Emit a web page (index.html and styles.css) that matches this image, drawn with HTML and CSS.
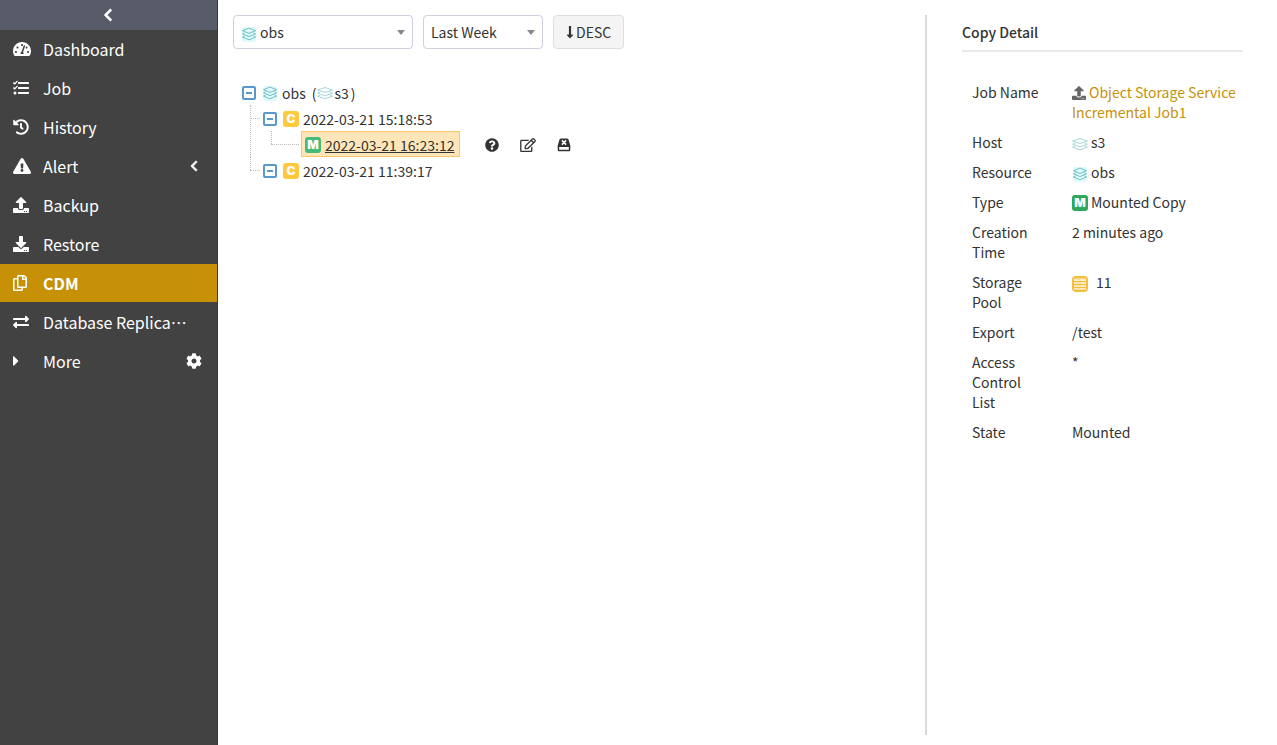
FILE: index.html
```
<!DOCTYPE html>
<html lang="en">
<head>
<meta charset="utf-8">
<title>CDM</title>
<link rel="stylesheet" href="styles.css">
</head>
<body>
<svg class="sprite" aria-hidden="true">
  <symbol id="chevron-left" viewBox="0 0 320 512"><path stroke="currentColor" stroke-width="24" d="M34.52 239.03L228.87 44.69c9.37-9.37 24.57-9.37 33.94 0l22.67 22.67c9.36 9.36 9.37 24.52.04 33.9L131.49 256l154.02 154.75c9.34 9.38 9.32 24.54-.04 33.9l-22.67 22.67c-9.37 9.37-24.57 9.37-33.94 0L34.52 272.97c-9.37-9.37-9.37-24.57 0-33.94z"/></symbol>
  <symbol id="gauge" viewBox="0 0 576 512"><path fill-rule="evenodd" d="M288 32C129 32 0 161 0 320c0 53 14 102 39 145 6 9 16 15 27 15h444c11 0 21-6 27-15 25-43 39-92 39-145C576 161 447 32 288 32zM288 96c18 0 32 14 32 32s-14 32-32 32-32-14-32-32 14-32 32-32zM96 384c-18 0-32-14-32-32s14-32 32-32 32 14 32 32-14 32-32 32zM144 240c-18 0-32-14-32-32s14-32 32-32 32 14 32 32-14 32-32 32zM247 380c3-19 15-35 31-44l61-184c4-13 18-20 30-15 13 4 20 17 16 30l-62 184c18 20 21 42 13 65H240c-5-11-5-24 7-36zM400 220l22-43c19-3 42 8 42 31 0 18-14 32-32 32-13 0-25-7-32-20zM480 384c-18 0-32-14-32-32s14-32 32-32 32 14 32 32-14 32-32 32z"/></symbol>
  <symbol id="tasks" viewBox="0 0 512 512"><path d="M176 60h320c9 0 16 7 16 16v32c0 9-7 16-16 16H176c-9 0-16-7-16-16V76c0-9 7-16 16-16zM176 224h320c9 0 16 7 16 16v32c0 9-7 16-16 16H176c-9 0-16-7-16-16v-32c0-9 7-16 16-16zM176 384h320c9 0 16 7 16 16v32c0 9-7 16-16 16H176c-9 0-16-7-16-16v-32c0-9 7-16 16-16z"/><circle cx="64" cy="416" r="48"/><path fill="none" stroke="currentColor" stroke-width="44" stroke-linecap="round" stroke-linejoin="round" d="M22 92l34 32 74-80M22 252l34 32 74-80"/></symbol>
  <symbol id="history" viewBox="0 0 512 512"><path d="M504 255.531c.253 136.64-111.18 248.372-247.82 248.468-59.015.042-113.223-20.53-155.822-54.911-11.077-8.94-11.905-25.541-1.839-35.607l11.267-11.267c8.609-8.609 22.353-9.551 31.891-1.984C173.062 425.135 212.781 440 256 440c101.705 0 184-82.311 184-184 0-101.705-82.311-184-184-184-48.814 0-93.149 18.969-126.068 49.932l50.754 50.754c10.08 10.08 2.941 27.314-11.313 27.314H24c-8.837 0-16-7.163-16-16V38.627c0-14.254 17.234-21.393 27.314-11.314l49.372 49.372C129.209 34.136 189.552 8 256 8c136.81 0 247.747 110.78 248 247.531zm-180.912 78.784l9.823-12.63c8.138-10.463 6.253-25.542-4.21-33.679L288 256.349V152c0-13.255-10.745-24-24-24h-16c-13.255 0-24 10.745-24 24v135.651l65.409 50.874c10.463 8.137 25.541 6.253 33.679-4.21z"/></symbol>
  <symbol id="warning" viewBox="0 0 576 512"><path d="M569.517 440.013C587.975 472.007 564.806 512 527.94 512H48.054c-36.937 0-59.999-40.055-41.577-71.987L246.423 23.985c18.467-32.009 64.72-31.951 83.154 0l239.94 416.028zM288 354c-25.405 0-46 20.595-46 46s20.595 46 46 46 46-20.595 46-46-20.595-46-46-46zm-43.673-165.346l7.418 136c.347 6.364 5.609 11.346 11.982 11.346h48.546c6.373 0 11.635-4.982 11.982-11.346l7.418-136c.375-6.874-5.098-12.654-11.982-12.654h-63.383c-6.884 0-12.356 5.78-11.981 12.654z"/></symbol>
  <symbol id="upload" viewBox="0 0 512 512"><path d="M296 384h-80c-13.3 0-24-10.7-24-24V192h-87.7c-17.8 0-26.7-21.5-14.1-34.1L242.3 5.7c7.5-7.5 19.8-7.5 27.3 0l152.2 152.2c12.6 12.6 3.7 34.1-14.1 34.1H320v168c0 13.3-10.7 24-24 24zm216-8v112c0 13.3-10.7 24-24 24H24c-13.3 0-24-10.7-24-24V376c0-13.3 10.7-24 24-24h136v8c0 30.9 25.1 56 56 56h80c30.9 0 56-25.1 56-56v-8h136c13.3 0 24 10.7 24 24zm-124 88c0-11-9-20-20-20s-20 9-20 20 9 20 20 20 20-9 20-20zm64 0c0-11-9-20-20-20s-20 9-20 20 9 20 20 20 20-9 20-20z"/></symbol>
  <symbol id="download" viewBox="0 0 512 512"><path d="M216 0h80c13.3 0 24 10.7 24 24v168h87.7c17.8 0 26.7 21.5 14.1 34.1L269.7 378.3c-7.5 7.5-19.8 7.5-27.3 0L90.1 226.1c-12.6-12.6-3.7-34.1 14.1-34.1H192V24c0-13.3 10.7-24 24-24zm296 376v112c0 13.3-10.7 24-24 24H24c-13.3 0-24-10.7-24-24V376c0-13.3 10.7-24 24-24h146.7l49 49c20.1 20.1 52.5 20.1 72.6 0l49-49H488c13.3 0 24 10.7 24 24zm-124 88c0-11-9-20-20-20s-20 9-20 20 9 20 20 20 20-9 20-20zm64 0c0-11-9-20-20-20s-20 9-20 20 9 20 20 20 20-9 20-20z"/></symbol>
  <symbol id="copy" viewBox="0 0 448 512"><path d="M433.941 65.941l-51.882-51.882A48 48 0 0 0 348.118 0H176c-26.51 0-48 21.49-48 48v48H48c-26.51 0-48 21.49-48 48v320c0 26.51 21.49 48 48 48h224c26.51 0 48-21.49 48-48v-48h80c26.51 0 48-21.49 48-48V99.882a48 48 0 0 0-14.059-33.941zM266 464H54a6 6 0 0 1-6-6V150a6 6 0 0 1 6-6h74v224c0 26.51 21.49 48 48 48h96v42a6 6 0 0 1-6 6zm128-96H182a6 6 0 0 1-6-6V54a6 6 0 0 1 6-6h106v88c0 13.255 10.745 24 24 24h88v202a6 6 0 0 1-6 6zm6-256h-64V48h9.632c1.591 0 3.117.632 4.243 1.757l48.368 48.368a6 6 0 0 1 1.757 4.243V112z"/></symbol>
  <symbol id="exchange" viewBox="0 0 512 512"><path d="M0 168v-16c0-13.255 10.745-24 24-24h360V80c0-21.367 25.899-32.042 40.971-16.971l80 80c9.372 9.373 9.372 24.569 0 33.941l-80 80C409.956 271.982 384 261.456 384 240v-48H24c-13.255 0-24-10.745-24-24zm488 152H128v-48c0-21.314-25.862-32.08-40.971-16.971l-80 80c-9.372 9.373-9.372 24.569 0 33.941l80 80C102.057 463.997 128 453.437 128 432v-48h360c13.255 0 24-10.745 24-24v-16c0-13.255-10.745-24-24-24z"/></symbol>
  <symbol id="caret-right" viewBox="0 0 192 512"><path d="M0 384.662V127.338c0-17.818 21.543-26.741 34.142-14.142l128.662 128.662c7.81 7.81 7.81 20.474 0 28.284L34.142 398.804C21.543 411.404 0 402.48 0 384.662z"/></symbol>
  <symbol id="cog" viewBox="0 0 512 512"><path d="M487.4 315.7l-42.6-24.6c4.3-23.2 4.3-47 0-70.2l42.6-24.6c4.9-2.8 7.1-8.6 5.5-14-11.1-35.6-30-67.8-54.7-94.6-3.8-4.1-10-5.1-14.8-2.3L380.8 110c-17.9-15.4-38.5-27.3-60.8-35.1V25.8c0-5.6-3.9-10.5-9.4-11.7-36.7-8.2-74.3-7.8-109.2 0-5.5 1.2-9.4 6.1-9.4 11.7V75c-22.2 7.9-42.8 19.8-60.8 35.1L88.7 85.5c-4.9-2.8-11-1.9-14.8 2.3-24.7 26.7-43.6 58.9-54.7 94.6-1.7 5.4.6 11.2 5.5 14L67.3 221c-4.3 23.2-4.3 47 0 70.2l-42.6 24.6c-4.9 2.8-7.1 8.6-5.5 14 11.1 35.6 30 67.8 54.7 94.6 3.8 4.1 10 5.1 14.8 2.3l42.6-24.6c17.9 15.4 38.5 27.3 60.8 35.1v49.2c0 5.6 3.9 10.5 9.4 11.7 36.7 8.2 74.3 7.8 109.2 0 5.5-1.2 9.4-6.1 9.4-11.7v-49.2c22.2-7.9 42.8-19.8 60.8-35.1l42.6 24.6c4.9 2.8 11 1.9 14.8-2.3 24.7-26.7 43.6-58.9 54.7-94.6 1.5-5.5-.7-11.3-5.6-14.1zM256 336c-44.1 0-80-35.9-80-80s35.9-80 80-80 80 35.9 80 80-35.9 80-80 80z"/></symbol>
  <symbol id="question" viewBox="0 0 512 512"><path d="M504 256c0 136.997-111.043 248-248 248S8 392.997 8 256C8 119.083 119.043 8 256 8s248 111.083 248 248zM262.655 90c-54.497 0-89.255 22.957-116.549 63.758-3.536 5.286-2.353 12.415 2.715 16.258l34.699 26.31c5.205 3.947 12.621 3.008 16.665-2.122 17.864-22.658 30.113-35.797 57.303-35.797 20.429 0 45.698 13.148 45.698 32.958 0 14.976-12.363 22.667-32.534 33.976C247.128 238.528 216 254.941 216 296v4c0 6.627 5.373 12 12 12h56c6.627 0 12-5.373 12-12v-1.333c0-28.462 83.186-29.647 83.186-106.667 0-58.002-60.165-102-116.531-102zM256 338c-25.365 0-46 20.635-46 46 0 25.364 20.635 46 46 46s46-20.636 46-46c0-25.365-20.635-46-46-46z"/></symbol>
  <symbol id="edit" viewBox="0 0 576 512"><path d="M402.3 344.9l32-32c5-5 13.7-1.5 13.7 5.7V464c0 26.5-21.5 48-48 48H48c-26.5 0-48-21.5-48-48V112c0-26.5 21.5-48 48-48h273.5c7.1 0 10.7 8.6 5.7 13.7l-32 32c-1.5 1.5-3.5 2.3-5.7 2.3H48v352h352V350.5c0-2.1.8-4.1 2.3-5.6zm156.6-201.8L296.3 405.7l-90.4 10c-26.2 2.9-48.5-19.2-45.6-45.6l10-90.4L432.9 17.1c22.9-22.9 59.9-22.9 82.7 0l43.2 43.2c22.9 22.9 22.9 60 .1 82.8zM460.1 174L402 115.9 216.2 301.8l-7.3 65.3 65.3-7.3L460.1 174zm64.8-79.7l-43.2-43.2c-4.1-4.1-10.8-4.1-14.8 0L436 82l58.1 58.1 30.9-30.9c4-4.2 4-10.8-.1-14.9z"/></symbol>
  <symbol id="unmount" viewBox="0 0 14 14"><path fill-rule="evenodd" d="M4 .5h6q1.200 0 1.500 1L13.300 7.500V12q0 1.300-1.300 1.300H2Q.7 13.300.7 12V7.500L2.500 1.500Q2.800.5 4 .5zM2.200 9v2.800h9.600V9z"/><path stroke="#fff" stroke-width="1.500" d="M4.900 2.400l4.200 4.200M9.100 2.400L4.900 6.600"/></symbol>
  <symbol id="arrow-down" viewBox="0 0 256 512"><path d="M168 345.941V44c0-6.627-5.373-12-12-12h-56c-6.627 0-12 5.373-12 12v301.941H41.941c-21.382 0-32.09 25.851-16.971 40.971l86.059 86.059c9.373 9.373 24.569 9.373 33.941 0l86.059-86.059c15.119-15.119 4.411-40.971-16.971-40.971H168z"/></symbol>
  <symbol id="resource" viewBox="0 0 16 16"><rect x="1" y="1" width="14" height="15" rx="2" fill="#e0fbfb"/><g fill="none" stroke="#62b8be" stroke-width=".9"><path d="M8 2l6.500 2.700L8 7.400 1.500 4.700z"/><path d="M3.500 6.700l-2 1.200L8 10.600l6.500-2.700-2-1.200M3.500 9.900l-2 1.200L8 13.800l6.500-2.700-2-1.200"/></g></symbol>
  <symbol id="host" viewBox="0 0 16 16"><g fill="none" stroke="#8fcbd0" stroke-width=".8"><path d="M8 2.500l7.400 2.500L8 7.500.6 5z"/><path d="M3.300 7L.6 8.200 8 10.800l7.400-2.600L12.700 7M3.300 10L.6 11.200 8 13.700l7.400-2.500-2.700-1.200"/></g></symbol>
  <symbol id="pool" viewBox="0 0 16 16"><rect width="16" height="16" rx="4" fill="#f3bd42"/><path fill="#fff1c8" d="M2 2.500h12v2.500H2zM2 6h12v2H2zM2 9h12v2H2zM2 12h12v1.800H2z"/><path stroke="#f3bd42" d="M3 3.700h6M3 7h6M3 10h6M3 13h6M11.500 3.700H13M11.500 7H13M11.500 10H13M11.500 13H13" stroke-width=".4"/></symbol>
</svg>
<div class="app">
  <aside class="sidebar">
    <button class="collapse" aria-label="Collapse menu"><svg class="icon w10"><use href="#chevron-left"/></svg></button>
    <nav class="menu">
      <a class="item" href="#"><svg class="icon w18"><use href="#gauge"/></svg><span class="label">Dashboard</span></a>
      <a class="item" href="#"><svg class="icon w16"><use href="#tasks"/></svg><span class="label">Job</span></a>
      <a class="item" href="#"><svg class="icon w16"><use href="#history"/></svg><span class="label">History</span></a>
      <a class="item" href="#"><svg class="icon w18"><use href="#warning"/></svg><span class="label">Alert</span><svg class="icon trailing chevron"><use href="#chevron-left"/></svg></a>
      <a class="item" href="#"><svg class="icon w16"><use href="#upload"/></svg><span class="label">Backup</span></a>
      <a class="item" href="#"><svg class="icon w16"><use href="#download"/></svg><span class="label">Restore</span></a>
      <a class="item active" href="#"><svg class="icon w14"><use href="#copy"/></svg><span class="label">CDM</span></a>
      <a class="item" href="#"><svg class="icon w16"><use href="#exchange"/></svg><span class="label" lang="zh-CN">Database Replica…</span></a>
      <a class="item" href="#"><svg class="icon w6"><use href="#caret-right"/></svg><span class="label">More</span><svg class="icon trailing"><use href="#cog"/></svg></a>
    </nav>
  </aside>
  <main class="main">
    <section class="copies">
      <div class="toolbar">
        <div class="picker wide"><svg class="icon picker-icon"><use href="#resource"/></svg><select aria-label="Resource"><option>obs</option></select></div>
        <div class="picker"><select aria-label="Period"><option>Last Week</option></select></div>
        <button class="sort"><svg class="icon w8"><use href="#arrow-down"/></svg>DESC</button>
      </div>
      <ul class="tree">
        <li>
          <div class="row"><button class="toggle" aria-label="Collapse"></button><svg class="icon w16 type"><use href="#resource"/></svg><span>obs</span><span class="host">(<svg class="icon w18"><use href="#host"/></svg>s3<span class="close">)</span></span></div>
          <ul>
            <li>
              <div class="row"><button class="toggle" aria-label="Collapse"></button><span class="badge c">C</span><span>2022-03-21 15:18:53</span></div>
              <ul>
                <li class="leaf">
                  <div class="row">
                    <a class="selected" href="#"><span class="badge m">M</span><span class="date">2022-03-21 16:23:12</span></a>
                    <div class="actions">
                      <button aria-label="Help"><svg class="icon"><use href="#question"/></svg></button>
                      <button aria-label="Edit"><svg class="icon w16"><use href="#edit"/></svg></button>
                      <button aria-label="Unmount"><svg class="icon"><use href="#unmount"/></svg></button>
                    </div>
                  </div>
                </li>
              </ul>
            </li>
            <li>
              <div class="row"><button class="toggle" aria-label="Collapse"></button><span class="badge c">C</span><span>2022-03-21 11:39:17</span></div>
            </li>
          </ul>
        </li>
      </ul>
    </section>
    <aside class="detail">
      <h2>Copy Detail</h2>
      <dl>
        <dt>Job Name</dt><dd><svg class="icon job"><use href="#upload"/></svg><a href="#">Object Storage Service Incremental Job1</a></dd>
        <dt>Host</dt><dd><svg class="icon inline"><use href="#host"/></svg>s3</dd>
        <dt>Resource</dt><dd><svg class="icon inline"><use href="#resource"/></svg>obs</dd>
        <dt>Type</dt><dd><span class="badge solid">M</span>Mounted Copy</dd>
        <dt>Creation Time</dt><dd>2 minutes ago</dd>
        <dt>Storage Pool</dt><dd><svg class="icon inline pool"><use href="#pool"/></svg>11</dd>
        <dt>Export</dt><dd>/test</dd>
        <dt>Access Control List</dt><dd>*</dd>
        <dt>State</dt><dd>Mounted</dd>
      </dl>
    </aside>
  </main>
</div>
</body>
</html>
```
FILE: styles.css
```
* { box-sizing: border-box; }
body {
  margin: 0;
  background: #fff;
  color: #333;
  font: 14px/20px "Noto Sans CJK SC", sans-serif;
}
button, select { font: inherit; color: inherit; }
button { cursor: pointer; }
a { color: inherit; text-decoration: none; }
ul { list-style: none; margin: 0; padding: 0; }
.sprite { display: none; }
.icon { display: block; flex: none; width: 14px; height: 16px; fill: currentColor; }
.w6 { width: 6px; }
.w8 { width: 8px; }
.w10 { width: 10px; }
.w14 { width: 14px; }
.w16 { width: 16px; }
.w18 { width: 18px; }

.app { display: flex; min-height: 100vh; }

.sidebar {
  flex: 0 0 218px;
  background: #424242;
  border-right: 1px solid #383838;
  color: #fff;
}
.collapse {
  display: flex;
  align-items: center;
  justify-content: center;
  width: 100%;
  height: 30px;
  border: 0;
  padding: 0 2px 0 0;
  background: #575c68;
  color: #fff;
}
.collapse .icon { height: 14px; }
.menu { display: grid; gap: 1px; }
.item {
  display: grid;
  grid-template-columns: 30px 1fr auto;
  align-items: center;
  height: 38px;
  padding: 0 15px 0 13px;
  font-size: 16px;
  line-height: 38px;
}
.label { white-space: nowrap; overflow: hidden; }
.active { background: #c69107; font-weight: bold; }
.trailing { width: 16px; height: 16px; }
.trailing.chevron { height: 12px; }

.main { flex: 1; display: flex; min-width: 0; padding: 15px 34px 10px 15px; }
.copies { flex: 1; min-width: 0; }
.toolbar { display: flex; gap: 10px; }
.picker { position: relative; width: 120px; }
.picker.wide { width: 180px; }
.picker select {
  appearance: none;
  width: 100%;
  height: 34px;
  padding: 0 24px 0 7px;
  border: 1px solid #cfcfe0;
  border-radius: 4px;
  background: #fff;
}
.picker.wide select { padding-left: 26px; }
.picker::after {
  content: "";
  position: absolute;
  right: 8px;
  top: 15px;
  border: 4px solid transparent;
  border-top: 5px solid #888;
  border-bottom: 0;
}
.picker-icon { position: absolute; left: 8px; top: 11px; width: 16px; }
.sort {
  display: flex;
  align-items: center;
  gap: 2px;
  height: 34px;
  padding: 0 12px;
  border: 1px solid #ddd;
  border-radius: 4px;
  background: #f4f4f4;
}
.sort .icon { height: 14px; }

.tree { padding: 30px 0 0 9px; }
.tree ul { padding-left: 21px; }
.tree li { position: relative; }
.tree li li::before, .tree li li::after {
  content: "";
  position: absolute;
  left: -13px;
  top: 0;
}
.tree li li::before { height: 100%; border-left: 1px dotted #bbb; }
.tree li li:last-child::before { height: 13px; }
.tree li li::after { top: 13px; width: 10px; border-top: 1px dotted #bbb; }
.tree li .leaf::after { width: 28px; }
.row { display: flex; align-items: center; height: 26px; padding-top: 2px; }
.leaf .row { padding: 0 0 0 17px; }
.toggle {
  display: flex;
  align-items: center;
  width: 14px;
  height: 14px;
  margin-right: 6px;
  padding: 0 2px;
  border: 2px solid #5898cb;
  border-radius: 2px;
  background: #fff;
}
.toggle::before { content: ""; flex: 1; height: 2px; background: #5898cb; }
.type { margin-right: 4px; }
.host { display: flex; align-items: center; margin-left: 6px; }
.close { margin-left: 2px; }
.badge {
  display: flex;
  align-items: center;
  justify-content: center;
  width: 16px;
  height: 16px;
  margin-right: 4px;
  border-radius: 3px;
  color: #fff;
  font: 900 12px/16px Inter, sans-serif;
}
.c { background: #ffc83d; }
.m { background: #46b97b; }
.selected {
  display: flex;
  align-items: center;
  height: 26px;
  padding: 2px 5px 0 3px;
  border: 1px solid #fbc56d;
  background: #ffe6b8;
}
.date { text-decoration: underline; }
.actions { display: flex; align-items: center; gap: 21px; margin-left: 25px; padding-top: 1px; }
.actions button { padding: 0; border: 0; background: none; }
.actions .icon { height: 14px; }

.detail {
  flex: 0 0 318px;
  border-left: 2px solid #ddd9db;
  padding: 7px 0 0 35px;
}
.detail h2 {
  margin: 0;
  padding-bottom: 8px;
  border-bottom: 2px solid #ece8e9;
  font-size: 14px;
  font-weight: 500;
}
dl {
  display: grid;
  grid-template-columns: 70px 1fr;
  gap: 10px 30px;
  margin: 30px 0 0;
  padding-left: 10px;
}
dd { margin: 0; }
dd a { color: #c69107; }
dd .icon { display: inline-block; margin-right: 3px; vertical-align: -4px; }
dd .inline { width: 16px; }
dd .job { height: 14px; color: #666; vertical-align: -2px; }
dd .pool { margin-right: 8px; }
dd .badge { display: inline-flex; margin: 3px 3px 0 0; vertical-align: top; }
.solid { background: #2fa85c; }
```
